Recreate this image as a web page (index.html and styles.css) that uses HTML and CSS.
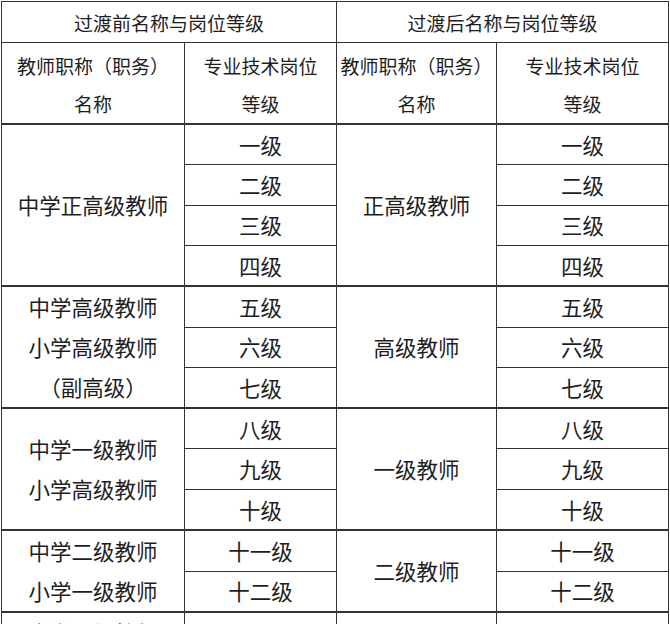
FILE: index.html
```html
<!DOCTYPE html>
<html lang="zh-CN">
<head>
<meta charset="utf-8">
<title>岗位等级对照表</title>
<link rel="stylesheet" href="styles.css">
</head>
<body>
<table class="grid">
  <colgroup>
    <col class="c1"><col class="c2"><col class="c3"><col class="c4">
  </colgroup>
  <thead>
    <tr class="h1">
      <th colspan="2">过渡前名称与岗位等级</th>
      <th colspan="2">过渡后名称与岗位等级</th>
    </tr>
    <tr class="h2">
      <th>教师职称（职务）<br>名称</th>
      <th>专业技术岗位<br>等级</th>
      <th>教师职称（职务）<br>名称</th>
      <th>专业技术岗位<br>等级</th>
    </tr>
  </thead>
  <tbody>
    <tr class="row grp">
      <td rowspan="4" class="name">中学正高级教师</td>
      <td>一级</td>
      <td rowspan="4" class="name">正高级教师</td>
      <td>一级</td>
    </tr>
    <tr class="row"><td>二级</td><td>二级</td></tr>
    <tr class="row"><td>三级</td><td>三级</td></tr>
    <tr class="row"><td>四级</td><td>四级</td></tr>

    <tr class="row grp">
      <td rowspan="3" class="name">中学高级教师<br>小学高级教师<br>（副高级）</td>
      <td>五级</td>
      <td rowspan="3" class="name">高级教师</td>
      <td>五级</td>
    </tr>
    <tr class="row"><td>六级</td><td>六级</td></tr>
    <tr class="row"><td>七级</td><td>七级</td></tr>

    <tr class="row grp">
      <td rowspan="3" class="name">中学一级教师<br>小学高级教师</td>
      <td>八级</td>
      <td rowspan="3" class="name">一级教师</td>
      <td>八级</td>
    </tr>
    <tr class="row"><td>九级</td><td>九级</td></tr>
    <tr class="row"><td>十级</td><td>十级</td></tr>

    <tr class="row grp">
      <td rowspan="2" class="name">中学二级教师<br>小学一级教师</td>
      <td>十一级</td>
      <td rowspan="2" class="name">二级教师</td>
      <td>十一级</td>
    </tr>
    <tr class="row"><td>十二级</td><td>十二级</td></tr>

    <tr class="last grp">
      <td class="name top">中学三级教师<br>小学二级教师<br>小学三级教师</td>
      <td>十三级</td>
      <td class="name">三级教师</td>
      <td>十三级</td>
    </tr>
  </tbody>
</table>
</body>
</html>
```

FILE: styles.css
```css
html, body {
  margin: 0;
  padding: 0;
  background: #ffffff;
}

body {
  padding: 1px 0 0 1px;
  font-family: "Noto Sans CJK SC", "Noto Sans", sans-serif;
  color: #1e1e1e;
}

.grid {
  border-collapse: collapse;
  table-layout: fixed;
  width: 667px;
}

.c1 { width: 183px; }
.c2 { width: 152px; }
.c3 { width: 160px; }
.c4 { width: 172px; }

.grid th,
.grid td {
  border: 1px solid #333333;
  padding: 0;
  text-align: center;
  vertical-align: middle;
  font-weight: normal;
}

.grid th {
  font-size: 19px;
  line-height: 38px;
}

.h1 { height: 41px; }
.h1 th { padding-top: 2px; line-height: 34px; }

.h2 { height: 80px; }
.h2 th {
  vertical-align: top;
  padding-top: 4px;
  line-height: 38px;
}

.grid td {
  font-size: 21.5px;
  line-height: 34px;
}

.grid td.name {
  line-height: 40px;
}

.row { height: 40.6px; }

.grp td { border-top: 2px solid #333333; }
.h2 th { border-bottom: 2px solid #333333; }

.last { height: 122px; }
.top { vertical-align: top; }
```
